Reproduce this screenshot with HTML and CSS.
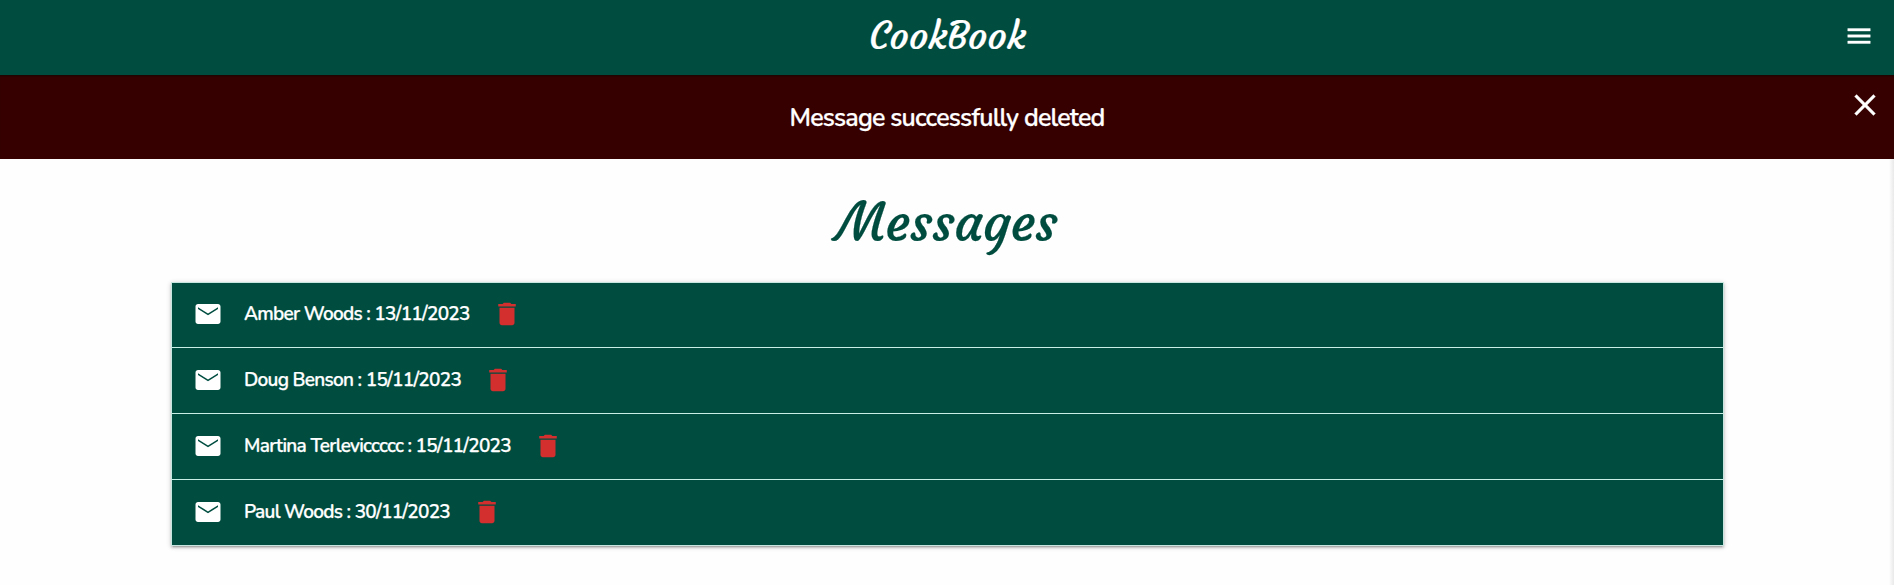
FILE: index.html
```html
<!DOCTYPE html>
<html lang="en">
<head>
<meta charset="utf-8">
<title>CookBook</title>
<link rel="stylesheet" href="styles.css">
</head>
<body>
<svg class="sprite" aria-hidden="true">
  <symbol id="mail" viewBox="0 0 24 24"><path d="M20 4H4c-1.100 0-1.990.900-1.990 2L2 18c0 1.100.900 2 2 2h16c1.100 0 2-.900 2-2V6c0-1.100-.900-2-2-2zm0 4l-8 5-8-5V6.500l8 5 8-5z"/></symbol>
  <symbol id="trash" viewBox="0 0 24 24"><path d="M6 19c0 1.100.900 2 2 2h8c1.100 0 2-.900 2-2V7H6v12zM19 4h-3.500l-1-1h-5l-1 1H5v2h14V4z"/></symbol>
</svg>
<nav class="navbar">
  <a class="brand">CookBook</a>
  <svg class="menu" viewBox="0 0 24 24"><path d="M3 18h18v-2H3v2zm0-5h18v-2H3v2zm0-7v2h18V6H3z"/></svg>
</nav>
<section class="flash">
  <h4 class="flash-text">Message successfully deleted</h4>
  <svg class="close" viewBox="0 0 24 24"><path d="M19 6.410L17.590 5 12 10.590 6.410 5 5 6.410 10.590 12 5 17.590 6.410 19 12 13.410 17.590 19 19 17.590 13.410 12z"/></svg>
</section>
<main>
  <h1 class="title">Messages</h1>
  <ul class="messages">
    <li class="message"><svg class="icon"><use href="#mail"/></svg><span class="label">Amber Woods : 13/11/2023</span><svg class="icon delete"><use href="#trash"/></svg></li>
    <li class="message"><svg class="icon"><use href="#mail"/></svg><span class="label">Doug Benson : 15/11/2023</span><svg class="icon delete"><use href="#trash"/></svg></li>
    <li class="message"><svg class="icon"><use href="#mail"/></svg><span class="label">Martina Terleviccccc : 15/11/2023</span><svg class="icon delete"><use href="#trash"/></svg></li>
    <li class="message"><svg class="icon"><use href="#mail"/></svg><span class="label">Paul Woods : 30/11/2023</span><svg class="icon delete"><use href="#trash"/></svg></li>
  </ul>
</main>
<div class="edge"></div>
</body>
</html>
```
FILE: styles.css
```css
* { box-sizing: border-box; }
body { margin: 0; height: 585px; overflow: hidden; background: #fefefe; color: #fff; font-family: Nunito, "Noto Sans", sans-serif; }
.sprite { display: none; }
.navbar, .flash { display: grid; grid-template-columns: 1fr auto 1fr; }
.navbar { height: 75px; background: #004d40; align-items: center; padding: 0 20px; }
.brand { grid-column: 2; font: 400 37.800px/71px Courgette, Lato, sans-serif; padding: 0 0 4px 1px; -webkit-text-stroke: .2px; }
svg { fill: currentColor; }
.menu { width: 30px; height: 30px; grid-column: 3; justify-self: end; margin-bottom: 4px; stroke: currentColor; stroke-width: .3; }
.flash { height: 84px; background: #370000; padding: 0 11px; box-shadow: inset 0 2px 2px -1px #180600; }
.flash-text { grid-column: 2; margin: 0; font-size: 25px; line-height: 86px; height: 84px; font-weight: 600; letter-spacing: -0.82px; white-space: nowrap; -webkit-text-stroke: .25px; }
.close { width: 36px; height: 36px; justify-self: end; margin-top: 12px; stroke: currentColor; stroke-width: .2; }
main { width: 1553px; margin: 0 auto; }
.title { margin: 0; height: 123px; color: #004d40; text-align: center; font: 400 52.500px/128px Courgette, Lato, sans-serif; -webkit-text-stroke: .2px; }
.messages { list-style: none; margin: 0; padding: 0; border: 1px solid #c8e6e0; box-shadow: 0 2px 2px 0 rgba(0,0,0,.14), 0 3px 1px -2px rgba(0,0,0,.12), 0 1px 5px 0 rgba(0,0,0,.2); }
.message { display: flex; align-items: center; height: 66px; padding: 0 0 2px 21.500px; background: #004d40; border-bottom: 1px solid #c8eee6; }
.message:first-child { height: 65px; }
.message:last-child { height: 65px; border: 0; }
.icon { width: 30px; height: 30px; flex: none; }
.label { margin-left: 21px; font-size: 19px; font-weight: 600; white-space: nowrap; letter-spacing: -0.71px; -webkit-text-stroke: .25px; }
.delete { margin-left: 22px; color: #d32f2f; }
.edge { position: absolute; right: 0; top: 159px; width: 5px; height: 426px; background: linear-gradient(to right, #fefefe, #e9e9e9); }
```
